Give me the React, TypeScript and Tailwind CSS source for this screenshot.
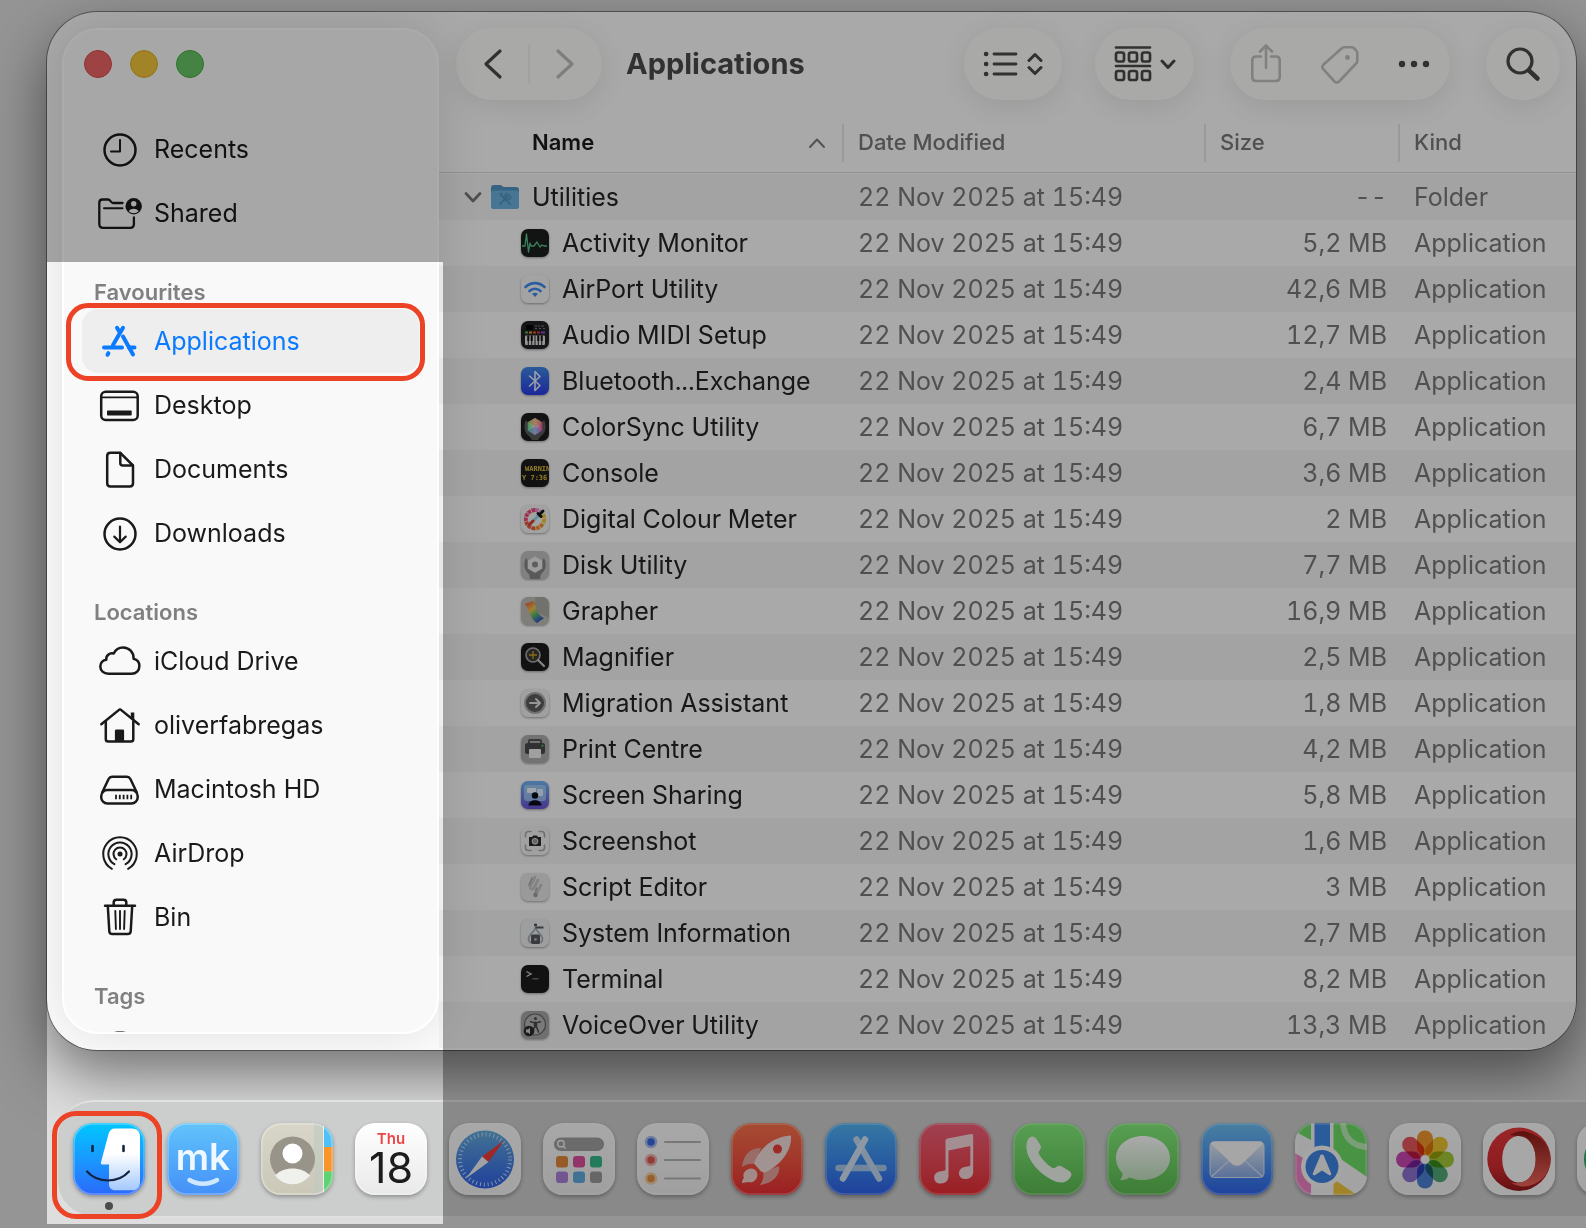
import type { ReactNode } from "react";

const FONT = "font-[Inter,'Noto_Sans',sans-serif]";

/* ---------- sidebar ---------- */

function Glyph({ children }: { children: ReactNode }) {
  return (
    <svg
      viewBox="0 0 44 44"
      className="size-11 shrink-0"
      fill="none"
      stroke="currentColor"
      strokeWidth="2.5"
      strokeLinecap="round"
      strokeLinejoin="round"
      aria-hidden="true"
    >
      {children}
    </svg>
  );
}

const glyphs: Record<string, ReactNode> = {
  recents: (
    <>
      <circle cx="22" cy="23" r="15.5" />
      <path d="M22 13v11.5h-9" strokeWidth="2" />
    </>
  ),
  shared: (
    <>
      <path d="M24.5 12H15c-2 0-2.600-3.500-5-3.500H4.500C2.500 8.500 1.300 9.700 1.300 11.700V33c0 2.600 1.200 3.800 3.800 3.800h27c2.600 0 3.800-1.200 3.800-3.800v-6.500" strokeWidth="2.300" />
      <path d="M6 17.300h18.500" strokeWidth="2" />
      <circle cx="35.700" cy="15.300" r="8.200" fill="currentColor" stroke="none" />
      <circle cx="35.700" cy="12.800" r="2.700" fill="#f9f9f9" stroke="none" />
      <path d="M30.800 20.300c1-3.400 8.800-3.400 9.800 0a7 7 0 0 1-9.800 0Z" fill="#f9f9f9" stroke="none" />
    </>
  ),
  applications: (
    <>
      <path d="M19 8.800l2.800 4.700M25 8.800 15 26" strokeWidth="4" />
      <path d="M6 28.500h18M31 28.500h5.500" strokeWidth="4" />
      <path d="M25 17.500 35 35.500M9.500 35.800l.9-1.600" strokeWidth="4" />
    </>
  ),
  desktop: (
    <>
      <rect x="3.200" y="8.700" width="36.500" height="28.300" rx="4.500" />
      <path d="M4 14.300h35" strokeWidth="1.800" />
      <rect x="9" y="27.500" width="24.700" height="5" rx=".8" fill="currentColor" stroke="none" />
    </>
  ),
  documents: (
    <>
      <path d="M12.500 5.800h9.800L35 18.500v17.800c0 2-1.300 3.200-3.200 3.200H12.500c-2 0-3.300-1.200-3.300-3.200V9c0-2 1.300-3.200 3.300-3.200Z" />
      <path d="M22.300 6v10c0 1.600.8 2.500 2.500 2.500h10" />
    </>
  ),
  downloads: (
    <>
      <circle cx="22" cy="23" r="15.500" />
      <path d="M22 15.500v15.300M16.300 25.600l5.700 5.600 5.700-5.600" strokeWidth="2.200" />
    </>
  ),
  cloud: (
    <path d="M10.500 34.700C5.500 34.700 2.300 31.500 2.300 27.500c0-3.700 2.600-6.300 6-6.800-.6-4 3.200-7.300 7.400-6.200 1.800-3.800 5.300-6 9.300-6 6.200 0 10.800 4.800 10.600 11.200 3.300.8 5.800 3.600 5.800 7.300 0 4.500-3.300 7.700-7.900 7.700Z" />
  ),
  home: (
    <>
      <path d="M3.300 21.300 20.700 7.100c.8-.7 1.800-.7 2.600 0L40.700 21.300" />
      <path d="M7.800 18.500V36c0 1.800.9 2.600 2.600 2.600h22.300c1.700 0 2.600-.8 2.600-2.600V18.500" />
      <path d="M32.800 9.500h3.500v8.500l-3.500-2.900Z" fill="currentColor" stroke="none" />
      <path d="M16.900 38.500V28c0-.8.500-1.400 1.300-1.400h6.600c.8 0 1.300.6 1.300 1.400v10.500Z" fill="currentColor" stroke="none" />
    </>
  ),
  disk: (
    <>
      <rect x="3.200" y="23" width="36.500" height="13.500" rx="6.200" />
      <path d="M4.200 25.500 10.600 12c.8-1.500 1.700-2.200 3.400-2.200h15c1.700 0 2.600.7 3.400 2.200l6.400 13.500" />
      <path d="M18 27.800v4.400M21.800 27.800v4.400M25.600 27.800v4.400M29.400 27.800v4.400M33.200 27.800v4.400" strokeWidth="1.800" strokeLinecap="butt" />
    </>
  ),
  airdrop: (
    <>
      <path d="M13.900 37.800a16.800 16.800 0 1 1 16.200 0" strokeWidth="2" />
      <path d="M16.400 33.200a11.600 11.600 0 1 1 11.200 0" strokeWidth="2" />
      <path d="M18.200 28.300a6.500 6.500 0 1 1 7.600 0" strokeWidth="2" />
      <circle cx="22" cy="23" r="2.500" fill="currentColor" stroke="none" />
    </>
  ),
  bin: (
    <>
      <path d="M7 10.700h30M15.700 10.500V7.500c0-1.800 1-2.800 2.800-2.800h7c1.800 0 2.800 1 2.800 2.800v3" />
      <path d="M9.800 11l1.500 25.200c.1 1.700 1.200 2.700 3 2.700h15.400c1.800 0 2.900-1 3-2.700L34.200 11" />
      <path d="M17.300 16l.6 18M22 16v18M26.700 16l-.6 18" strokeWidth="1.900" />
    </>
  ),
};

type NavItem = { label: string; glyph: string; selected?: boolean };

const recentItems: NavItem[] = [
  { label: "Recents", glyph: "recents" },
  { label: "Shared", glyph: "shared" },
];

const favourites: NavItem[] = [
  { label: "Applications", glyph: "applications", selected: true },
  { label: "Desktop", glyph: "desktop" },
  { label: "Documents", glyph: "documents" },
  { label: "Downloads", glyph: "downloads" },
];

const locations: NavItem[] = [
  { label: "iCloud Drive", glyph: "cloud" },
  { label: "oliverfabregas", glyph: "home" },
  { label: "Macintosh HD", glyph: "disk" },
  { label: "AirDrop", glyph: "airdrop" },
  { label: "Bin", glyph: "bin" },
];

function NavList({ title, items }: { title?: string; items: NavItem[] }) {
  return (
    <section>
      {title && (
        <h2 className="h-16 pt-[33px] pl-3 text-[22px] leading-7 font-semibold text-[#808080]">{title}</h2>
      )}
      <ul>
        {items.map((item) => (
          <li key={item.label} className="relative">
            <a
              href={`#${item.glyph}`}
              aria-current={item.selected ? "page" : undefined}
              className={
                item.selected
                  ? "flex h-16 items-center gap-3 rounded-2xl bg-[#eeeeee] pl-4 text-[25px] text-[#0a7aff]"
                  : "flex h-16 items-center gap-3 rounded-2xl pl-4 text-[25px] text-[#1a1a1a]"
              }
            >
              <Glyph>{glyphs[item.glyph]}</Glyph>
              <span className="pt-0.5">{item.label}</span>
            </a>
            {item.selected && (
              <div className="pointer-events-none absolute -top-1.5 -right-1.5 -bottom-2 -left-4 rounded-[22px] border-5 border-[#ec4226]" />
            )}
          </li>
        ))}
      </ul>
    </section>
  );
}

function Sidebar() {
  return (
    <aside className="relative z-10 w-[392px] shrink-0 py-4 pl-[15px]">
      <div className="flex h-full flex-col overflow-hidden rounded-[36px] border-2 border-white bg-[#f9f9f9] px-[18px] shadow-[0_0_50px_rgba(0,20,10,0.12)]">
        <div className="flex h-[87px] gap-[18px] pt-5 pl-0.5">
          <button aria-label="Close" className="size-7 rounded-full border border-[#dc4a4a] bg-[#ea6464]" />
          <button aria-label="Minimise" className="size-7 rounded-full border border-[#e0ac20] bg-[#f0c43c]" />
          <button aria-label="Zoom" className="size-7 rounded-full border border-[#3cae3c] bg-[#67c467]" />
        </div>
        <nav aria-label="Sidebar">
          <NavList items={recentItems} />
          <NavList title="Favourites" items={favourites} />
          <NavList title="Locations" items={locations} />
          <h2 className="h-16 pt-[33px] pl-3 text-[22px] leading-7 font-semibold text-[#808080]">Tags</h2>
        </nav>
        <div className="h-[19px] overflow-hidden pt-[18px] pl-4 text-[#777777]">
          <Glyph>
            <circle cx="22" cy="14" r="13" />
          </Glyph>
        </div>
      </div>
    </aside>
  );
}

/* ---------- toolbar ---------- */

const pill = "flex h-[72px] items-center rounded-full bg-[#fdfdfb] shadow-[0_6px_28px_rgba(0,0,0,0.09)]";

function Toolbar() {
  return (
    <header className="flex items-center pt-4 pr-4 pl-[17px] text-[#4a4a4a]">
      <div className={`${pill} w-[146px]`}>
        <button aria-label="Back" className="flex flex-1 justify-center pl-0.5">
          <svg width="36" height="36" fill="none" stroke="currentColor" strokeWidth="3.200" strokeLinecap="round" strokeLinejoin="round">
            <path d="M25 5 11 18l14 13" />
          </svg>
        </button>
        <span className="h-10 w-0.5 bg-[#f0f0ee]" />
        <button aria-label="Forward" className="flex flex-1 justify-center pr-0.5 text-[#bdbdbd]">
          <svg width="36" height="36" fill="none" stroke="currentColor" strokeWidth="3.200" strokeLinecap="round" strokeLinejoin="round">
            <path d="M11 5l14 13-14 13" />
          </svg>
        </button>
      </div>
      <h1 className="ml-6 text-[29px] font-bold">Applications</h1>
      <div className="ml-auto flex items-center">
        <button aria-label="View as list" className={`${pill} w-[98px] justify-center gap-2`}>
          <svg width="36" height="36" fill="none" stroke="currentColor" strokeWidth="2.800" strokeLinecap="round">
            <path d="M11 8h22M11 18h22M11 28h22" />
            <path d="M3 8h.2M3 18h.2M3 28h.2" strokeWidth="4.500" />
          </svg>
          <svg width="16" height="24" fill="none" stroke="currentColor" strokeWidth="3" strokeLinecap="round" strokeLinejoin="round">
            <path d="M2 8.500 8 2.500l6 6M2 15.500l6 6 6-6" />
          </svg>
        </button>
        <button aria-label="Group items" className={`${pill} ml-[33px] w-[99px] justify-center gap-2`}>
          <svg width="38" height="38" fill="none" stroke="currentColor" strokeWidth="2.700" strokeLinecap="round">
            <path d="M2 2.500h34M2 21h34" />
            <rect x="2" y="7.500" width="8" height="9" rx="2" />
            <rect x="15" y="7.500" width="8" height="9" rx="2" />
            <rect x="28" y="7.500" width="8" height="9" rx="2" />
            <rect x="2" y="26" width="8" height="9" rx="2" />
            <rect x="15" y="26" width="8" height="9" rx="2" />
            <rect x="28" y="26" width="8" height="9" rx="2" />
          </svg>
          <svg width="16" height="12" fill="none" stroke="currentColor" strokeWidth="3" strokeLinecap="round" strokeLinejoin="round">
            <path d="M2 3l6 6.500L14 3" />
          </svg>
        </button>
        <div className={`${pill} ml-9 w-[220px] justify-between px-4`}>
          <button aria-label="Share" className="text-[#c0c0be]">
            <svg width="40" height="44" fill="none" stroke="currentColor" strokeWidth="2.600" strokeLinecap="round" strokeLinejoin="round">
              <path d="M15 14.500h-5c-2.500 0-3.700 1.200-3.700 3.700v17.100c0 2.500 1.200 3.700 3.700 3.700h20c2.500 0 3.700-1.200 3.700-3.700V18.200c0-2.500-1.200-3.700-3.700-3.700h-5M20 26V4M14 9.500 20 3.500l6 6" />
            </svg>
          </button>
          <button aria-label="Edit tags" className="text-[#c0c0be]">
            <svg width="40" height="44" fill="none" stroke="currentColor" strokeWidth="2.600" strokeLinejoin="round">
              <path d="M21.500 6.500c.8-.8 1.700-1.200 2.900-1.200h7.200c1 0 1.900.4 2.600 1.100l2 2.200c.8.800 1.100 1.700 1.100 2.800v7.200c0 1.200-.4 2.100-1.200 2.900L19 39.500c-1.400 1.400-3.100 1.400-4.500 0L3.300 27.200c-1.400-1.500-1.300-3 0-4.400Z" />
              <circle cx="27.500" cy="15.500" r="2.400" fill="currentColor" stroke="none" />
            </svg>
          </button>
          <button aria-label="More">
            <svg width="40" height="44" fill="currentColor">
              <circle cx="8" cy="22" r="3.200" />
              <circle cx="20" cy="22" r="3.200" />
              <circle cx="32" cy="22" r="3.200" />
            </svg>
          </button>
        </div>
        <button aria-label="Search" className={`${pill} ml-9 w-[74px] justify-center`}>
          <svg width="40" height="40" fill="none" stroke="currentColor" strokeWidth="3.200" strokeLinecap="round">
            <circle cx="17" cy="17" r="12" />
            <path d="M26 26.500l8.500 8" strokeWidth="4.500" />
          </svg>
        </button>
      </div>
    </header>
  );
}

/* ---------- file list ---------- */

// 28px drawings, one per utility
const appArt: Record<string, ReactNode> = {
  activity: (
    <>
      <rect width="28" height="28" rx="7" fill="#1b1e1f" />
      <path d="M1 17h3l1.500-12L7.500 23 9 14l1 3h3l3-4 3 5 2-2 2 1h3" fill="none" stroke="#56c28b" strokeWidth="1.300" strokeLinejoin="round" />
    </>
  ),
  airport: (
    <>
      <rect width="28" height="28" rx="7" fill="#f3f3f5" />
      <path d="M4.500 12a13.500 13.500 0 0 1 19 0M8.500 16a8 8 0 0 1 11 0" fill="none" stroke="#3f8df0" strokeWidth="2.600" strokeLinecap="round" />
      <path d="M11 18.800a5 5 0 0 1 6 0L14 22Z" fill="#3f8df0" />
    </>
  ),
  midi: (
    <>
      <rect width="28" height="28" rx="7" fill="#222224" />
      <rect x="5" y="4" width="7" height="5" fill="#050505" />
      <path d="M14 5h2m1 0h2m1 0h3M14 7.500h2m2 0h2m2 0h2" stroke="#777" />
      <path d="M4 11.500h3" stroke="#4bb44b" strokeWidth="2" />
      <path d="M8 11.500h3" stroke="#e0a030" strokeWidth="2" />
      <path d="M12 11.500h3" stroke="#e05a2a" strokeWidth="2" />
      <path d="M16 11.500h3" stroke="#d8304a" strokeWidth="2" />
      <path d="M20 11.500h4" stroke="#8a4ae0" strokeWidth="2" />
      <rect x="4" y="14.500" width="20" height="9.500" rx="1" fill="#dedede" />
      <path d="M7.300 14.500V24M10.700 14.500V24M14 14.500V24M17.300 14.500V24M20.700 14.500V24" stroke="#222" />
      <path d="M7.300 14.500v5.500M10.700 14.500v5.500M17.300 14.500v5.500M20.700 14.500v5.500" stroke="#111" strokeWidth="2" />
    </>
  ),
  bluetooth: (
    <>
      <linearGradient id="bt" x2="0" y2="1">
        <stop stopColor="#3f88e6" />
        <stop offset="1" stopColor="#2b3ae6" />
      </linearGradient>
      <rect width="28" height="28" rx="7" fill="url(#bt)" />
      <path d="M8.500 9 19 18.500 14 23.500V4.500L19 9.500 8.500 19" fill="none" stroke="#e6ecfb" strokeWidth="1.600" strokeLinejoin="round" strokeLinecap="round" />
    </>
  ),
  colorsync: (
    <>
      <linearGradient id="cs">
        <stop stopColor="#5fe07f" />
        <stop offset=".5" stopColor="#f0e8ee" />
        <stop offset="1" stopColor="#ec4a94" />
      </linearGradient>
      <rect width="28" height="28" rx="7" fill="#1d1d1e" />
      <path d="M5 7C2 13 3 20 9 24l2 3h6l2-3c6-4 7-11 4-17l-2 3v8l-7 4-7-4v-8Z" fill="#5a5a5a" />
      <path d="M14 5l7.300 4.200v8.600L14 22l-7.300-4.200V9.200Z" fill="url(#cs)" />
      <path d="M14 5l7.300 4.200L14 13.500 6.700 9.200Z" fill="#f0a050" opacity=".55" />
      <path d="M6.700 17.800 14 13.500l7.300 4.300L14 22Z" fill="#6a8af0" opacity=".5" />
    </>
  ),
  console: (
    <>
      <clipPath id="con">
        <rect width="28" height="28" rx="7" />
      </clipPath>
      <rect width="28" height="28" rx="7" fill="#1c1c1d" />
      <g clipPath="url(#con)" fontSize="7" fontWeight="700" fill="#dcbc3c" fontFamily="DejaVu Sans Mono">
        <text x="4" y="12">WARNIN</text>
        <text x="1" y="21">Y 7:36</text>
      </g>
    </>
  ),
  colour: (
    <>
      <rect width="28" height="28" rx="7" fill="#f2f2f2" />
      <g fill="none" strokeWidth="4" strokeDasharray="3.500 .7">
        <path d="M5 16a9.200 9.200 0 0 1 9-11" stroke="#ee4a7a" />
        <path d="M14 5a9.200 9.200 0 0 1 5 1.500" stroke="#e98ad0" />
        <path d="M22 9.500a9.200 9.200 0 0 1 0 9" stroke="#f3c22c" />
        <path d="M21.500 19A9.200 9.200 0 0 1 14 23.400" stroke="#f09028" />
        <path d="M14 23.400A9.200 9.200 0 0 1 5 16" stroke="#ee5a3a" />
      </g>
      <path d="M8 20l9-9" stroke="#8adbe8" strokeWidth="3" strokeLinecap="round" />
      <path d="M8 20l4-4" stroke="#d84034" strokeWidth="3" strokeLinecap="round" />
      <path d="M17 8.500l3 3M18.500 9.500l3.500-3.500" stroke="#15151c" strokeWidth="3" strokeLinecap="round" />
    </>
  ),
  diskutil: (
    <>
      <rect width="28" height="28" rx="7" fill="#c0c0c0" />
      <path d="M5 7c-3 6-2 12 3 16l1 5h10l1-5c5-4 6-10 3-16l-1.500 2v8.500L14 22l-7.500-4.500V9Z" fill="#858585" />
      <path d="M14 5.500l7 4v8l-7 4-7-4v-8Z" fill="#ebebeb" />
      <circle cx="14" cy="13.500" r="3" fill="#8c8c8c" />
    </>
  ),
  grapher: (
    <>
      <linearGradient id="gr" x1=".2" y1="0" x2=".8" y2="1">
        <stop stopColor="#e8603a" />
        <stop offset=".35" stopColor="#f0c050" />
        <stop offset=".6" stopColor="#58b868" />
        <stop offset="1" stopColor="#2a3ae0" />
      </linearGradient>
      <rect width="28" height="28" rx="7" fill="#bebcb7" />
      <path d="M14 0h7a7 7 0 0 1 7 7v14L14 14Z" fill="#a9aaa4" />
      <path d="M4 7l8-3c4 3 2 13 11 17l-7 5C9 22 8 12 4 7Z" fill="url(#gr)" />
    </>
  ),
  magnifier: (
    <>
      <rect width="28" height="28" rx="7" fill="#1b1b1c" />
      <circle cx="12" cy="12" r="7" fill="#3a3a36" stroke="#a8a8a8" strokeWidth="1.600" />
      <path d="M17 17l6 6" stroke="#c8c8c8" strokeWidth="2.200" strokeLinecap="round" />
      <path d="M12 8v8M8 12h8" stroke="#c9a227" strokeWidth="1.300" />
    </>
  ),
  migration: (
    <>
      <rect width="28" height="28" rx="7" fill="#efefef" />
      <circle cx="14" cy="14" r="11" fill="#a9a9a9" />
      <circle cx="14" cy="14" r="9" fill="#5b5b5b" />
      <path d="M9 14h9M15 10l4 4-4 4" fill="none" stroke="#dedede" strokeWidth="2" strokeLinecap="round" strokeLinejoin="round" />
    </>
  ),
  print: (
    <>
      <rect width="28" height="28" rx="7" fill="#acacac" />
      <path d="M8 9V6c0-.6.4-1 1-1h10c.6 0 1 .4 1 1v3" fill="none" stroke="#555" strokeWidth="2" />
      <rect x="4" y="8" width="20" height="11" rx="2.500" fill="#4a4a4c" />
      <circle cx="21.500" cy="10.800" r="1" fill="#3ad060" />
      <rect x="8" y="14" width="12" height="9" rx="1" fill="#efefef" />
    </>
  ),
  sharing: (
    <>
      <linearGradient id="sh" x2="0" y2="1">
        <stop stopColor="#70b6f2" />
        <stop offset="1" stopColor="#6a50d8" />
      </linearGradient>
      <rect width="28" height="28" rx="7" fill="url(#sh)" />
      <rect x="3" y="4" width="22" height="16" rx="3" fill="#a8d4f2" opacity=".7" />
      <rect x="6" y="7" width="9" height="5" rx="1" fill="#eef6ff" />
      <rect x="16" y="8" width="6" height="7" rx="1" fill="#dfeeff" />
      <circle cx="14" cy="14.500" r="3.200" fill="#0d0d1a" />
      <path d="M7.500 24.500c0-7 13-7 13 0Z" fill="#0d0d1a" />
    </>
  ),
  screenshot: (
    <>
      <rect width="28" height="28" rx="7" fill="#f0f0f0" />
      <path d="M4.500 10V7.500a3 3 0 0 1 3-3H10M18 4.500h2.500a3 3 0 0 1 3 3V10M23.500 18v2.500a3 3 0 0 1-3 3H18M10 23.500H7.500a3 3 0 0 1-3-3V18" fill="none" stroke="#a8a8a8" strokeWidth="1.600" strokeLinecap="round" />
      <path d="M8 10h3l1.200-1.500h3.600L17 10h3v9H8Z" fill="#2c2c2e" />
      <circle cx="14" cy="14.300" r="2.900" fill="#9a9a9a" stroke="#ddd" />
    </>
  ),
  script: (
    <>
      <rect width="28" height="28" rx="7" fill="#e6e6e6" />
      <path d="M14 4 9 14c0 2 2 3 4 1l4-8M20 12l-5 9" fill="none" stroke="#c4c4c4" strokeWidth="2.800" strokeLinecap="round" />
      <path d="M11 5 8 12M15.500 15 14 22" stroke="#a8a8a8" strokeWidth="1.600" strokeLinecap="round" />
      <circle cx="14.500" cy="22" r="2.300" fill="#a0a0a0" />
    </>
  ),
  system: (
    <>
      <rect width="28" height="28" rx="7" fill="#ebecee" />
      <path d="M14.500 4v5c-1 4-7 6-7 11 0 2 1 3 2 4M14.500 9c1 4 7 6 7 11 0 2-1 3-2 4" fill="none" stroke="#a3adb4" strokeWidth="1.800" />
      <path d="M13 6h3M14.500 8.500h8" stroke="#55595e" strokeWidth="1.800" />
      <rect x="10" y="15.500" width="9" height="9.500" rx="1.500" fill="#55585e" />
      <circle cx="14.500" cy="20.500" r="1.400" fill="#b0b0b0" />
    </>
  ),
  terminal: (
    <>
      <rect width="28" height="28" rx="7" fill="#1b1b1b" />
      <path d="M5.500 6.500 10 9l-4.500 2.500" fill="none" stroke="#c8c8c8" strokeWidth="1.400" />
      <path d="M11.500 13.800h6" stroke="#7a7a7a" strokeWidth="1.300" />
    </>
  ),
  voiceover: (
    <>
      <rect width="28" height="28" rx="7" fill="#a6a6a6" />
      <circle cx="14" cy="13.500" r="10.500" fill="#b6b6b6" stroke="#666" strokeWidth="1.200" />
      <circle cx="14.500" cy="7.500" r="1.500" fill="#4a4a4a" />
      <path d="M9.500 10.800l4 1v4L11.500 21M19.500 10.800l-4 1v4l2 5.200M14.500 11v5" fill="none" stroke="#4a4a4a" strokeWidth="1.500" strokeLinecap="round" />
      <circle cx="8" cy="20" r="5.300" fill="#2a2a2a" />
      <path d="M5 18.500h2l2-1.800v6.600L7 21.500H5Z" fill="#cccccc" />
    </>
  ),
};

const utilities = [
  { art: "activity", name: "Activity Monitor", size: "5,2 MB" },
  { art: "airport", name: "AirPort Utility", size: "42,6 MB" },
  { art: "midi", name: "Audio MIDI Setup", size: "12,7 MB" },
  { art: "bluetooth", name: "Bluetooth...Exchange", size: "2,4 MB" },
  { art: "colorsync", name: "ColorSync Utility", size: "6,7 MB" },
  { art: "console", name: "Console", size: "3,6 MB" },
  { art: "colour", name: "Digital Colour Meter", size: "2 MB" },
  { art: "diskutil", name: "Disk Utility", size: "7,7 MB" },
  { art: "grapher", name: "Grapher", size: "16,9 MB" },
  { art: "magnifier", name: "Magnifier", size: "2,5 MB" },
  { art: "migration", name: "Migration Assistant", size: "1,8 MB" },
  { art: "print", name: "Print Centre", size: "4,2 MB" },
  { art: "sharing", name: "Screen Sharing", size: "5,8 MB" },
  { art: "screenshot", name: "Screenshot", size: "1,6 MB" },
  { art: "script", name: "Script Editor", size: "3 MB" },
  { art: "system", name: "System Information", size: "2,7 MB" },
  { art: "terminal", name: "Terminal", size: "8,2 MB" },
  { art: "voiceover", name: "VoiceOver Utility", size: "13,3 MB" },
];

const MODIFIED = "22 Nov 2025 at 15:49";
const headCell = "flex h-[38px] items-center border-l-2 border-[#e6e6e6] pl-3.5";

function FileTable() {
  return (
    <table className="w-full table-fixed border-collapse text-left text-[25px] whitespace-nowrap text-[#787878] tabular-nums">
      <colgroup>
        <col className="w-[403px]" />
        <col className="w-[362px]" />
        <col className="w-[194px]" />
        <col />
      </colgroup>
      <thead className="text-[22px]">
        <tr className="h-[72px] border-b border-[#d9d9d9]">
          <th className="p-0 pt-3.5 font-semibold text-[#1c1c1c]" aria-sort="ascending">
            <div className="flex h-[38px] items-center justify-between pr-4 pl-[93px]">
              Name
              <svg width="18" height="12" fill="none" stroke="#7c7c7c" strokeWidth="2" strokeLinecap="round" strokeLinejoin="round">
                <path d="M2 10 9 2.500l7 7.500" />
              </svg>
            </div>
          </th>
          <th className="p-0 pt-3.5 font-medium">
            <div className={headCell}>Date Modified</div>
          </th>
          <th className="p-0 pt-3.5 font-medium">
            <div className={headCell}>Size</div>
          </th>
          <th className="p-0 pt-3.5 font-medium">
            <div className={headCell}>Kind</div>
          </th>
        </tr>
      </thead>
      <tbody>
        <tr className="h-0.5" />
        <tr className="h-[46px] bg-[#f4f4f4]">
          <td className="p-0">
            <div className="flex items-center pl-[25px] text-[#242424]">
              <button aria-label="Collapse Utilities">
                <svg width="18" height="12" className="block" fill="none" stroke="#777777" strokeWidth="2.800" strokeLinecap="round" strokeLinejoin="round">
                  <path d="M2 2.500 9 10l7-7.500" />
                </svg>
              </button>
              <svg width="30" height="28" viewBox="0 0 30 28" className="mr-3 ml-2" aria-hidden="true">
                <path d="M1 5c0-2 1-3 3-3h6c2 0 2.500 2 4.500 2H26c2 0 3 1 3 3v5H1Z" fill="#4f94c0" />
                <rect x="1" y="7.500" width="28" height="18.500" rx="2.500" fill="#69b1dc" />
                <path d="M10 21l9-9M20 21l-9-9" stroke="#5494bd" strokeWidth="2" strokeLinecap="round" />
                <path d="M18 10.500a3 3 0 1 0 3 3M9.500 11.500l3-1.500" fill="none" stroke="#5494bd" strokeWidth="1.600" />
              </svg>
              <span className="pt-0.5">Utilities</span>
            </div>
          </td>
          <td className="p-0 pt-0.5 pl-4">{MODIFIED}</td>
          <td className="p-0 pt-0.5 pr-[11px] text-right">--</td>
          <td className="p-0 pt-0.5 pl-4">Folder</td>
        </tr>
        {utilities.map((app) => (
          <tr key={app.name} className="h-[46px] even:bg-[#f4f4f4]">
            <td className="p-0">
              <div className="flex items-center gap-[13px] pl-[82px] text-[#242424]">
                <svg width="28" height="28" viewBox="0 0 28 28" className="overflow-visible drop-shadow-[0_1px_1px_rgba(0,0,0,0.35)]" aria-hidden="true">
                  {appArt[app.art]}
                </svg>
                <span className="pt-0.5">{app.name}</span>
              </div>
            </td>
            <td className="p-0 pt-0.5 pl-4">{MODIFIED}</td>
            <td className="p-0 pt-0.5 pr-[11px] text-right">{app.size}</td>
            <td className="p-0 pt-0.5 pl-4">Application</td>
          </tr>
        ))}
      </tbody>
    </table>
  );
}

/* ---------- dock ---------- */

const petals = ["#f59a2e", "#f0c832", "#a8cf3a", "#55b07c", "#4f86dc", "#9478d8", "#d04ab8", "#ec5a60"];

const dockApps: { name: string; tile: string; art: ReactNode }[] = [
  {
    name: "Finder",
    tile: "from-[#00c6ff] to-[#2b68fb]",
    art: (
      <>
        <linearGradient id="face" x2="0" y2="1">
          <stop offset=".4" stopColor="#ffffff" />
          <stop offset="1" stopColor="#a5c8fd" />
        </linearGradient>
        <path d="M42 5.500h17c5 0 8 3 8 8V59c0 5-3 8.300-8 8.300H42c-3.500 0-6-2.500-6-6V41.500h-6.500c-1.300 0-1.900-.8-1.600-2L35.500 11c1-3.500 3-5.500 6.500-5.500Z" fill="url(#face)" />
        <path d="M19.500 23v5M50.500 23v5" stroke="#14233f" strokeWidth="2.600" strokeLinecap="round" />
        <path d="M14 48.500c11 12 31 12 42 0" fill="none" stroke="#14233f" strokeWidth="2.200" strokeLinecap="round" />
      </>
    ),
  },
  {
    name: "MacKeeper",
    tile: "from-[#62c3fa] to-[#4590f8]",
    art: (
      <>
        <text x="36" y="47" textAnchor="middle" fontSize="37" fontWeight="600" fill="#f0f8ff" fontFamily="Inter">mk</text>
        <path d="M22.500 57c8 5 19 5 27.500 0" fill="none" stroke="#cfe8ff" strokeWidth="4.500" strokeLinecap="round" />
      </>
    ),
  },
  {
    name: "Contacts",
    tile: "from-[#d8d6c8] to-[#cbc8b8]",
    art: (
      <>
        <path d="M62.500 0H72v24h-9.500Z" fill="#4fc0f8" />
        <path d="M62.500 24H72v24.500h-9.500Z" fill="#f8962c" />
        <path d="M62.500 48.500H72V72h-9.500Z" fill="#5fd274" />
        <path d="M53 0h9.500v72H53Z" fill="#bfcac2" opacity=".6" />
        <path d="M62.500 0v72" stroke="#eeeee6" />
        <circle cx="31.500" cy="36" r="22.500" fill="#99948a" />
        <circle cx="31.500" cy="30.500" r="10" fill="#fff" />
        <path d="M14 52.500c8-9.500 27-9.500 35 0a22 22 0 0 1-35 0Z" fill="#f0f0ec" />
      </>
    ),
  },
  {
    name: "Calendar",
    tile: "from-[#ffffff] to-[#e9e9e9]",
    art: (
      <>
        <text x="36" y="21" textAnchor="middle" fontSize="15" fontWeight="600" fill="#ee4444" fontFamily="Inter">Thu</text>
        <text x="36" y="60" textAnchor="middle" fontSize="43" fill="#1c1c1c" fontFamily="Inter">18</text>
      </>
    ),
  },
  {
    name: "Safari",
    tile: "from-[#fbfbfb] to-[#f4f4f4]",
    art: (
      <>
        <linearGradient id="saf" x2="0" y2="1">
          <stop stopColor="#63abdc" />
          <stop offset="1" stopColor="#3060e8" />
        </linearGradient>
        <circle cx="36" cy="36.500" r="29" fill="url(#saf)" />
        <circle cx="36" cy="36.500" r="25" fill="none" stroke="#c4dcf2" strokeWidth="4" strokeDasharray="1 2.920" />
        <path d="M55 17.500 39.500 39 33 33.500Z" fill="#ef3b38" />
        <path d="M17 55.500 33 33.500l6.500 5.500Z" fill="#f0f2f4" />
      </>
    ),
  },
  {
    name: "Apps",
    tile: "from-[#fbfbfb] to-[#eeeeee]",
    art: (
      <>
        <rect x="11" y="14.500" width="50" height="13.500" rx="6.700" fill="#a0a0a0" />
        <circle cx="18" cy="20.700" r="3.200" fill="none" stroke="#f4f4f4" strokeWidth="1.400" />
        <path d="M20.500 23.500l2 2" stroke="#f4f4f4" strokeWidth="1.500" />
        <rect x="13" y="33" width="12" height="11.500" rx="3" fill="#e0883a" />
        <rect x="30" y="33" width="12" height="11.500" rx="3" fill="#dc509c" />
        <rect x="47" y="33" width="12" height="11.500" rx="3" fill="#36b888" />
        <rect x="13" y="48.500" width="12" height="11.500" rx="3" fill="#ac80d8" />
        <rect x="30" y="48.500" width="12" height="11.500" rx="3" fill="#60aadc" />
        <rect x="47" y="48.500" width="12" height="11.500" rx="3" fill="#999999" />
      </>
    ),
  },
  {
    name: "Reminders",
    tile: "from-[#fbfbfb] to-[#eeeeee]",
    art: (
      <>
        <g strokeWidth="2.500">
          <circle cx="14" cy="19" r="5" fill="#3a68dc" stroke="#a8bcec" />
          <circle cx="14" cy="37" r="5" fill="#dc5a50" stroke="#ecb4b0" />
          <circle cx="14" cy="55.500" r="5" fill="#e29040" stroke="#efcca4" />
        </g>
        <path d="M28 19h35M28 37h35M28 55.500h35" stroke="#b4b4b4" strokeWidth="2" strokeLinecap="round" />
      </>
    ),
  },
  {
    name: "Launcher",
    tile: "from-[#f8724c] to-[#e82c34]",
    art: (
      <>
        <path d="M30 25C18 24 12 34 11 44c4-3 8-4 13-3Z" fill="#e6a19a" />
        <path d="M48 43c2 10-8 18-19 19 3-4 4-8 3-13Z" fill="#e6a19a" />
        <path d="M60 12.500c1 15-10 29-26 37l-4-1-7-8c5-15 19-27 37-28Z" fill="#f0dcda" />
        <circle cx="46.500" cy="26" r="4.500" fill="#e6403c" />
        <path d="M18 46c5-2 10 3 8 8-1 4-5 6-9 5l-6 1c0-3 1-4 2-5-2-4 1-8 5-9Z" fill="#f2cfca" />
      </>
    ),
  },
  {
    name: "App Store",
    tile: "from-[#52b4f4] to-[#3060ea]",
    art: (
      <g strokeWidth="6.500" strokeLinecap="round" opacity=".92">
        <path d="M13.500 45h45" stroke="#b0cce8" />
        <path d="M31.500 16.500 54 55.500" stroke="#cbdef0" />
        <path d="M40 16.500 18 55.500" stroke="#dfeaf4" />
      </g>
    ),
  },
  {
    name: "Music",
    tile: "from-[#f0607a] to-[#e62c32]",
    art: (
      <g fill="#f3d6d8">
        <path d="M26.500 18c0-1.500.8-2.300 2-2.600L52 11c1.400-.3 2.200.4 2.200 1.800V49c0 4-3 7-7.500 7-4 0-6.700-2.200-6.700-5.800 0-3.700 2.800-6 7-6.500l3-.5c1-.2 1.300-.7 1.300-1.700V23L29.500 27.500V53c0 4.500-3 7.500-7.700 7.500-4 0-6.600-2.200-6.600-5.800 0-3.600 2.600-6 6.600-6.500l3.200-.5c1-.2 1.500-.8 1.500-1.800Z" />
      </g>
    ),
  },
  {
    name: "Phone",
    tile: "from-[#84ee7c] to-[#5cba52]",
    art: (
      <path d="M13.500 21c.5-4 3-7.500 6-7.500 1.700 0 2.900 1 4 2.600l3.500 5.400c1.400 2.200 1.300 3.800-.3 5.700-1.500 1.800-1.300 3 0 5 3 4.700 7 8.700 11.600 12 2 1.400 3.300 1.300 5-.1 2-1.600 3.700-1.700 6-.4l6.500 4c3 2 3.400 4 1.300 7-3.700 5.500-10.200 6-17.400 2.500-11-5.300-20-14.300-24.500-24.700-1.500-3.800-2-7.800-1.700-11.500Z" fill="#edf5ec" />
    ),
  },
  {
    name: "Messages",
    tile: "from-[#84ee7c] to-[#5cba52]",
    art: (
      <>
        <linearGradient id="msg" x2="0" y2="1">
          <stop stopColor="#ffffff" />
          <stop offset="1" stopColor="#bfe0bc" />
        </linearGradient>
        <path d="M36 13c15 0 27 9.500 27 22S51 57 36 57c-5 0-9.500-.9-13.500-2.600-3 2-6.500 3-10 2.600 2.200-2 3.300-4.500 3-7C11.500 46 9 41 9 35c0-12.500 12-22 27-22Z" fill="url(#msg)" />
      </>
    ),
  },
  {
    name: "Mail",
    tile: "from-[#6fbff2] to-[#3064ea]",
    art: (
      <>
        <linearGradient id="env" x2="0" y2="1">
          <stop stopColor="#e8eef4" />
          <stop offset="1" stopColor="#86a8e6" />
        </linearGradient>
        <rect x="9" y="18.500" width="54" height="36" rx="4.500" fill="url(#env)" stroke="#dde8f4" />
        <path d="M10 54l20-18M62 54 42 36" stroke="#cfdcf2" strokeWidth="1.600" />
        <path d="M10 20.500 30.500 40.500c3.300 3 7.700 3 11 0L62 20.500c-.8-1-2-1.600-3.500-1.600h-45c-1.500 0-2.700.6-3.500 1.600Z" fill="#f8f8f8" />
      </>
    ),
  },
  {
    name: "Maps",
    tile: "from-[#f4f4f4] to-[#f4f4f4]",
    art: (
      <>
        <path d="M0 12C2 5 6 0 12 0h4v17L3 10Z" fill="#6edb68" />
        <path d="M38.500 0H72v54L38.500 31Z" fill="#6edb68" />
        <path d="M48 0c1 14 9 23 24 24" fill="none" stroke="#b8ecb4" strokeWidth="6" />
        <path d="M19.500 0H35v32H19.500Z" fill="#3f88e8" />
        <path d="M0 30l16 10v32H0Z" fill="#ec80c4" />
        <path d="M38.500 56 62 72H38.500Z" fill="#f0c43c" />
        <circle cx="27" cy="43.500" r="21" fill="#f6f6f6" />
        <circle cx="27" cy="43.500" r="16.500" fill="#3f84e0" />
        <path d="M27 31.500c.9 0 1.500.5 1.900 1.400l7.200 17.300c.6 1.600-.8 2.600-2.200 1.800L27 47.500 20.100 52c-1.400.8-2.800-.2-2.200-1.800l7.200-17.300c.4-.9 1-1.400 1.900-1.400Z" fill="#f4f4f4" />
      </>
    ),
  },
  {
    name: "Photos",
    tile: "from-[#fbfbfb] to-[#efefef]",
    art: (
      <g className="[&>rect]:mix-blend-multiply">
        {petals.map((color, i) => (
          <rect key={color} x="28" y="7.500" width="16" height="25" rx="8" fill={color} transform={`rotate(${i * 45} 36 36.500)`} />
        ))}
        <circle cx="36" cy="36.500" r="4.300" fill="#f6f6f6" />
      </g>
    ),
  },
  {
    name: "Opera",
    tile: "from-[#fbfbfb] to-[#f8f8f8]",
    art: (
      <>
        <linearGradient id="opa" x2="0" y2="1">
          <stop stopColor="#e6393c" />
          <stop offset=".6" stopColor="#d42c32" />
          <stop offset="1" stopColor="#94181c" />
        </linearGradient>
        <linearGradient id="opb" x2="0" y2="1">
          <stop stopColor="#8a1a14" />
          <stop offset="1" stopColor="#ee645c" />
        </linearGradient>
        <path fillRule="evenodd" d="M36 4.500a31.700 31.700 0 1 0 0 63.400 31.700 31.700 0 0 0 0-63.400Zm0 8.500c9.500 0 16.700 10 16.700 23.200S45.500 59.500 36 59.500s-16.700-10-16.700-23.300S26.500 13 36 13Z" fill="url(#opa)" />
        <path d="M27 12c5-4 13-5 20-2 12 4 20.700 14 20.700 26.200C67.700 49 59 59 47 62.500c-7 2-14 .5-19-3 3 .8 5.500 1 8 0 9.500 0 16.700-10 16.700-23.300S45.500 13 36 13c-3 0-6-.5-9-1Z" fill="url(#opb)" />
      </>
    ),
  },
  {
    name: "Browser",
    tile: "from-[#fbfbfb] to-[#f4f4f4]",
    art: <circle cx="36" cy="36" r="29" fill="#34a866" />,
  },
];

function Dock() {
  return (
    <nav aria-label="Dock" className="mt-[50px] ml-[58px] overflow-hidden">
      <ul className="flex h-[117px] w-max gap-[22px] rounded-l-[36px] border-t-2 border-b border-white/40 bg-[#cccdcd] pt-[21px] pl-[15px]">
        {dockApps.map((app) => (
          <li key={app.name} className="flex flex-col items-center">
            <button
              aria-label={app.name}
              className={`size-[72px] overflow-hidden rounded-[20px] bg-linear-to-b shadow-[0_2px_4px_rgba(0,0,0,0.3)] ${app.tile}`}
            >
              <svg viewBox="0 0 72 72" className="block size-[72px]" aria-hidden="true">
                {app.art}
                <rect x="1" y="1" width="70" height="70" rx="19" fill="none" stroke="#fff" strokeOpacity=".3" strokeWidth="1.500" />
              </svg>
            </button>
            {app.name === "Finder" && <span className="mt-[7px] size-2 rounded-full bg-[#4b4b4b]" />}
          </li>
        ))}
      </ul>
    </nav>
  );
}

export default function App() {
  return (
    <div className={`relative min-h-screen overflow-hidden bg-[#dedede] pt-3 pb-3 ${FONT}`}>
      <main className="mr-[10px] ml-[47px] flex overflow-hidden rounded-[50px] bg-[#fcfcfc] shadow-[0_0_0_1px_rgba(0,0,0,0.4),0_24px_60px_rgba(0,0,0,0.5)]">
        <Sidebar />
        <div className="min-w-0 flex-1 pb-px">
          <Toolbar />
          <FileTable />
        </div>
      </main>
      <Dock />
      {/* everything outside this box is dimmed by its spread shadow */}
      <div className="pointer-events-none absolute top-[262px] bottom-[5px] left-[47px] z-20 w-[396px] shadow-[0_0_0_2000px_rgba(0,0,0,0.33)]" />
      <div className="pointer-events-none absolute bottom-[10px] left-[52px] z-30 h-[108px] w-[110px] rounded-[24px] border-5 border-[#ec4226]" />
    </div>
  );
}
